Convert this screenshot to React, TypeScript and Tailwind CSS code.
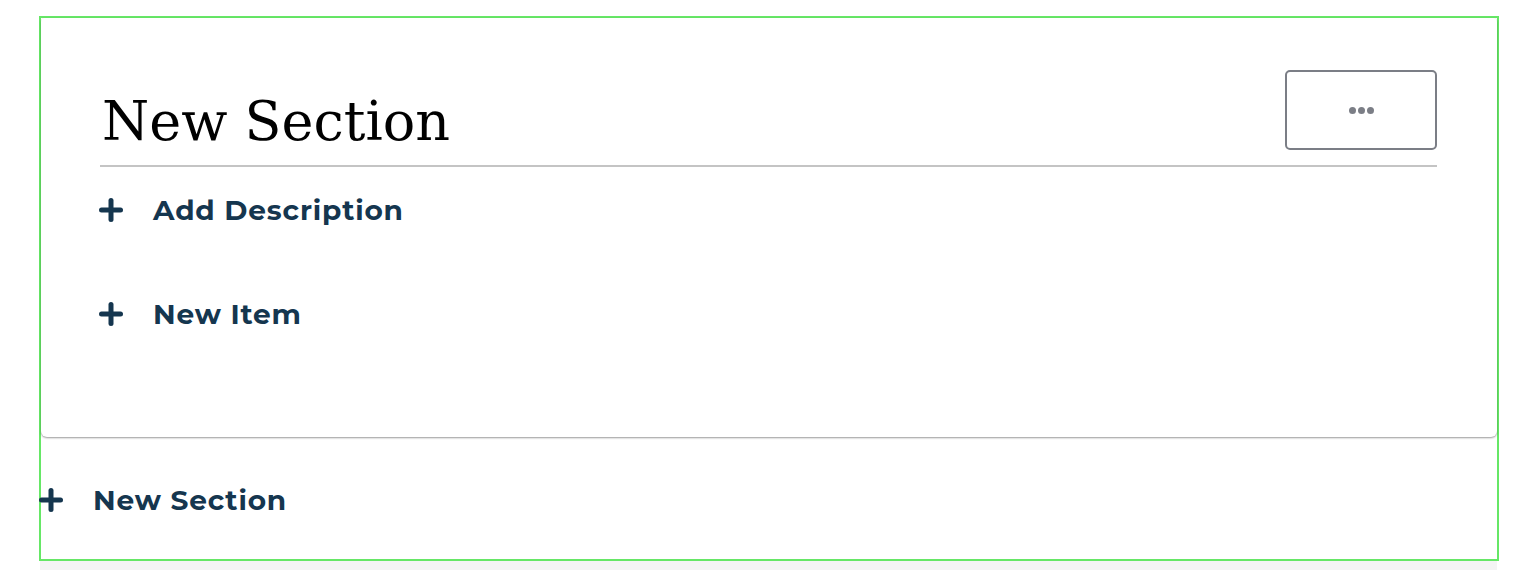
import React from "react";

function PlusIcon() {
  return (
    <svg width="24" height="24" viewBox="0 0 24 24" className="shrink-0">
      <line x1="12" y1="2.5" x2="12" y2="21.5" stroke="#15364f" strokeWidth="5" strokeLinecap="round" />
      <line x1="2.5" y1="12" x2="21.5" y2="12" stroke="#15364f" strokeWidth="5" strokeLinecap="round" />
    </svg>
  );
}

function AddRow({ label, className = "" }: { label: string; className?: string }) {
  return (
    <button className={`flex items-center gap-[30px] text-[#15364f] h-[28px] ${className}`}>
      <PlusIcon />
      <span
        className="text-[28px] leading-none font-bold tracking-[0.03em]"
        style={{ fontFamily: "Montserrat, Inter, 'Open Sans', sans-serif" }}
      >
        {label}
      </span>
    </button>
  );
}

export default function App() {
  return (
    <div className="min-h-[570px] bg-white pt-[16px] pl-[39px]">
      <div className="w-[1460px] h-[545px] border-2 border-[#66e766] flex flex-col">
        <section className="rounded-b-[6px] rounded-t-[4px] bg-white shadow-[0_1px_2px_rgba(0,0,0,0.4)] pl-[59px] pr-[60px] pt-[52px] h-[419px] shrink-0">
          <header className="flex items-start justify-between border-b-2 border-[#c4c4c4] pb-[15px]">
            <h2
              className="mt-[25px] ml-[2px] text-[54px] leading-none text-black"
              style={{ fontFamily: "'DejaVu Serif', serif" }}
            >
              New Section
            </h2>
            <button className="w-[152px] h-[80px] rounded-[5px] border-2 border-[#7b7e86] flex items-center justify-center gap-[2px]">
              <span className="w-[7px] h-[7px] rounded-full bg-[#7b7e86]" />
              <span className="w-[7px] h-[7px] rounded-full bg-[#7b7e86]" />
              <span className="w-[7px] h-[7px] rounded-full bg-[#7b7e86]" />
            </button>
          </header>
          <AddRow label="Add Description" className="mt-[29px] -ml-[1px]" />
          <AddRow label="New Item" className="mt-[76px] -ml-[1px]" />
        </section>
        <AddRow label="New Section" className="mt-[49px] -ml-[2px] gap-[29px]" />
      </div>
      <div className="w-[1457px] h-[9px] ml-[1px] bg-[#f4f4f4]" />
    </div>
  );
}
